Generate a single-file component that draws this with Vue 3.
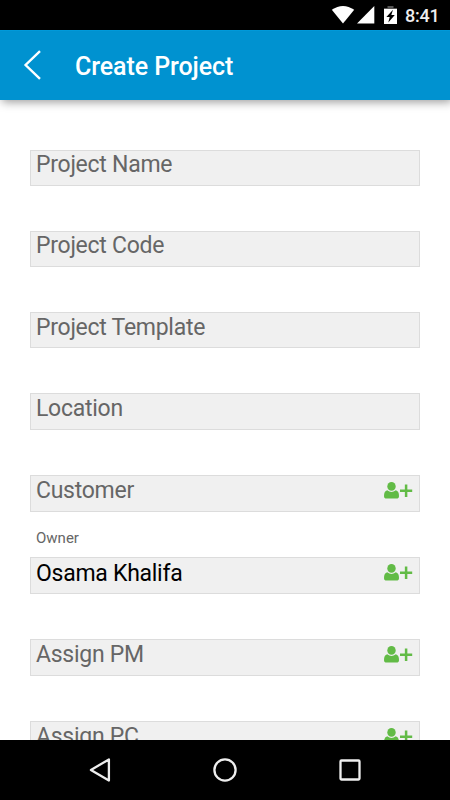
<script setup>
const fields = [
  { text: 'Project Name', raised: true },
  { text: 'Project Code', raised: true },
  { text: 'Project Template' },
  { text: 'Location', tall: true },
  { text: 'Customer', tall: true, person: true },
  { text: 'Osama Khalifa', label: 'Owner', filled: true, tall: true, person: true },
  { text: 'Assign PM', tall: true, person: true },
  { text: 'Assign PC', tall: true, person: true }
]
</script>

<template>
  <div class="screen">
    <div class="status">
      <svg class="wifi" width="24" height="18" viewBox="0 0 24 18"><path d="M.8 3.8Q12-3.8 23.2 3.8L12 17.4Z" fill="#fff" /></svg>
      <svg class="signal" width="18" height="18" viewBox="0 0 18 18"><path d="M17.3 0V17.6H0Z" fill="#fff" /></svg>
      <svg class="battery" width="13" height="18" viewBox="0 0 13 18">
        <path d="M3.5 0h6v2H13v2H0V2h3.5z" fill="#555" />
        <path d="M0 3h13v15H0z" fill="#fff" />
        <path d="M9 3.8 2.4 11h3.3l-1.4 5.5L10.8 9H7.3z" fill="#000" />
      </svg>
      <span class="time">8:41</span>
    </div>
    <header class="bar">
      <svg class="back" width="20" height="32" viewBox="0 0 20 32"><path d="M18 2.2 3.6 16l14.4 13.8" fill="none" stroke="#fff" stroke-width="2.4" /></svg>
      <h1>Create Project</h1>
    </header>
    <main class="form">
      <div v-for="f in fields" :key="f.text" class="row">
        <div class="label">{{ f.label }}</div>
        <div class="box" :class="{ tall: f.tall, filled: f.filled, raised: f.raised }">
          <span class="text">{{ f.text }}</span>
          <svg v-if="f.person" class="person" width="30" height="18" viewBox="0 0 30 18">
            <g fill="#62bb46">
              <ellipse cx="7.5" cy="4.4" rx="4.2" ry="4.3" />
              <path d="M3.2 8.2Q7.5 11.6 11.8 8.2Q15 9 15 14Q15 16.6 12.4 16.6H2.6Q0 16.6 0 14Q0 9 3.2 8.2Z" />
            </g>
            <path d="M16 8.8H28.2M22.1 2.6V15" stroke="#62bb46" stroke-width="2.5" />
          </svg>
        </div>
      </div>
    </main>
    <nav class="nav">
      <svg width="24" height="26" viewBox="0 0 24 26"><path d="M20.9 2.4V23.6L2.9 13Z" fill="none" stroke="#eee" stroke-width="2.3" stroke-linejoin="round" /></svg>
      <svg width="24" height="26" viewBox="0 0 24 26"><circle cx="12" cy="13" r="10.6" fill="none" stroke="#eee" stroke-width="2.3" /></svg>
      <svg width="24" height="26" viewBox="0 0 24 26"><rect x="2.5" y="3.5" width="19" height="19" rx="1" fill="none" stroke="#eee" stroke-width="2.3" /></svg>
    </nav>
  </div>
</template>

<style>
body { margin: 0; }
</style>

<style scoped>
.screen {
  width: 450px;
  height: 800px;
  display: flex;
  flex-direction: column;
  overflow: hidden;
  background: #fff;
  font-family: Roboto, "Liberation Sans", sans-serif;
}
.status {
  flex: none;
  height: 30px;
  box-sizing: border-box;
  display: flex;
  align-items: flex-start;
  padding: 6px 0 0 331px;
  background: #000;
  color: #fff;
}
.signal { margin-left: 2px; }
.battery { margin-left: 9px; }
.time {
  margin-left: 8px;
  color: #eee;
  font-size: 18px;
  font-weight: 500;
  line-height: 20px;
  letter-spacing: -0.2px;
}
.bar {
  flex: none;
  height: 70px;
  box-sizing: border-box;
  display: flex;
  align-items: center;
  padding-left: 22px;
  border-top: 1px solid #0099d9;
  background: #0092d0;
  box-shadow: 2px 2px 9px rgba(0, 0, 0, 0.4);
  z-index: 1;
}
.back { margin-top: -2px; }
.bar h1 {
  margin: 2px 0 0 33px;
  color: #fff;
  font-size: 25px;
  font-weight: 500;
  line-height: 30px;
  letter-spacing: -0.08px;
}
.form {
  flex: 1;
  min-height: 0;
  overflow: hidden;
  padding: 5px 30px 0;
}
.label {
  height: 45px;
  box-sizing: border-box;
  padding: 16px 0 0 6px;
  color: #666;
  font-size: 15px;
  line-height: 20px;
}
.box {
  height: 36px;
  box-sizing: border-box;
  display: flex;
  justify-content: space-between;
  align-items: flex-start;
  padding: 0 5px;
  border: 1px solid #dcdcdc;
  background: #f0f0f0;
  color: #666;
}
.box.tall { height: 37px; }
.text {
  font-size: 23px;
  line-height: 30px;
  letter-spacing: -0.27px;
  white-space: nowrap;
}
.raised .text { line-height: 28px; }
.filled { color: #000; }
.filled .text { padding-top: 1px; }
.person { margin-top: 6px; }
.nav {
  flex: none;
  height: 60px;
  display: flex;
  align-items: center;
  justify-content: space-between;
  box-sizing: border-box;
  padding: 0 88px;
  background: #000;
}
</style>
